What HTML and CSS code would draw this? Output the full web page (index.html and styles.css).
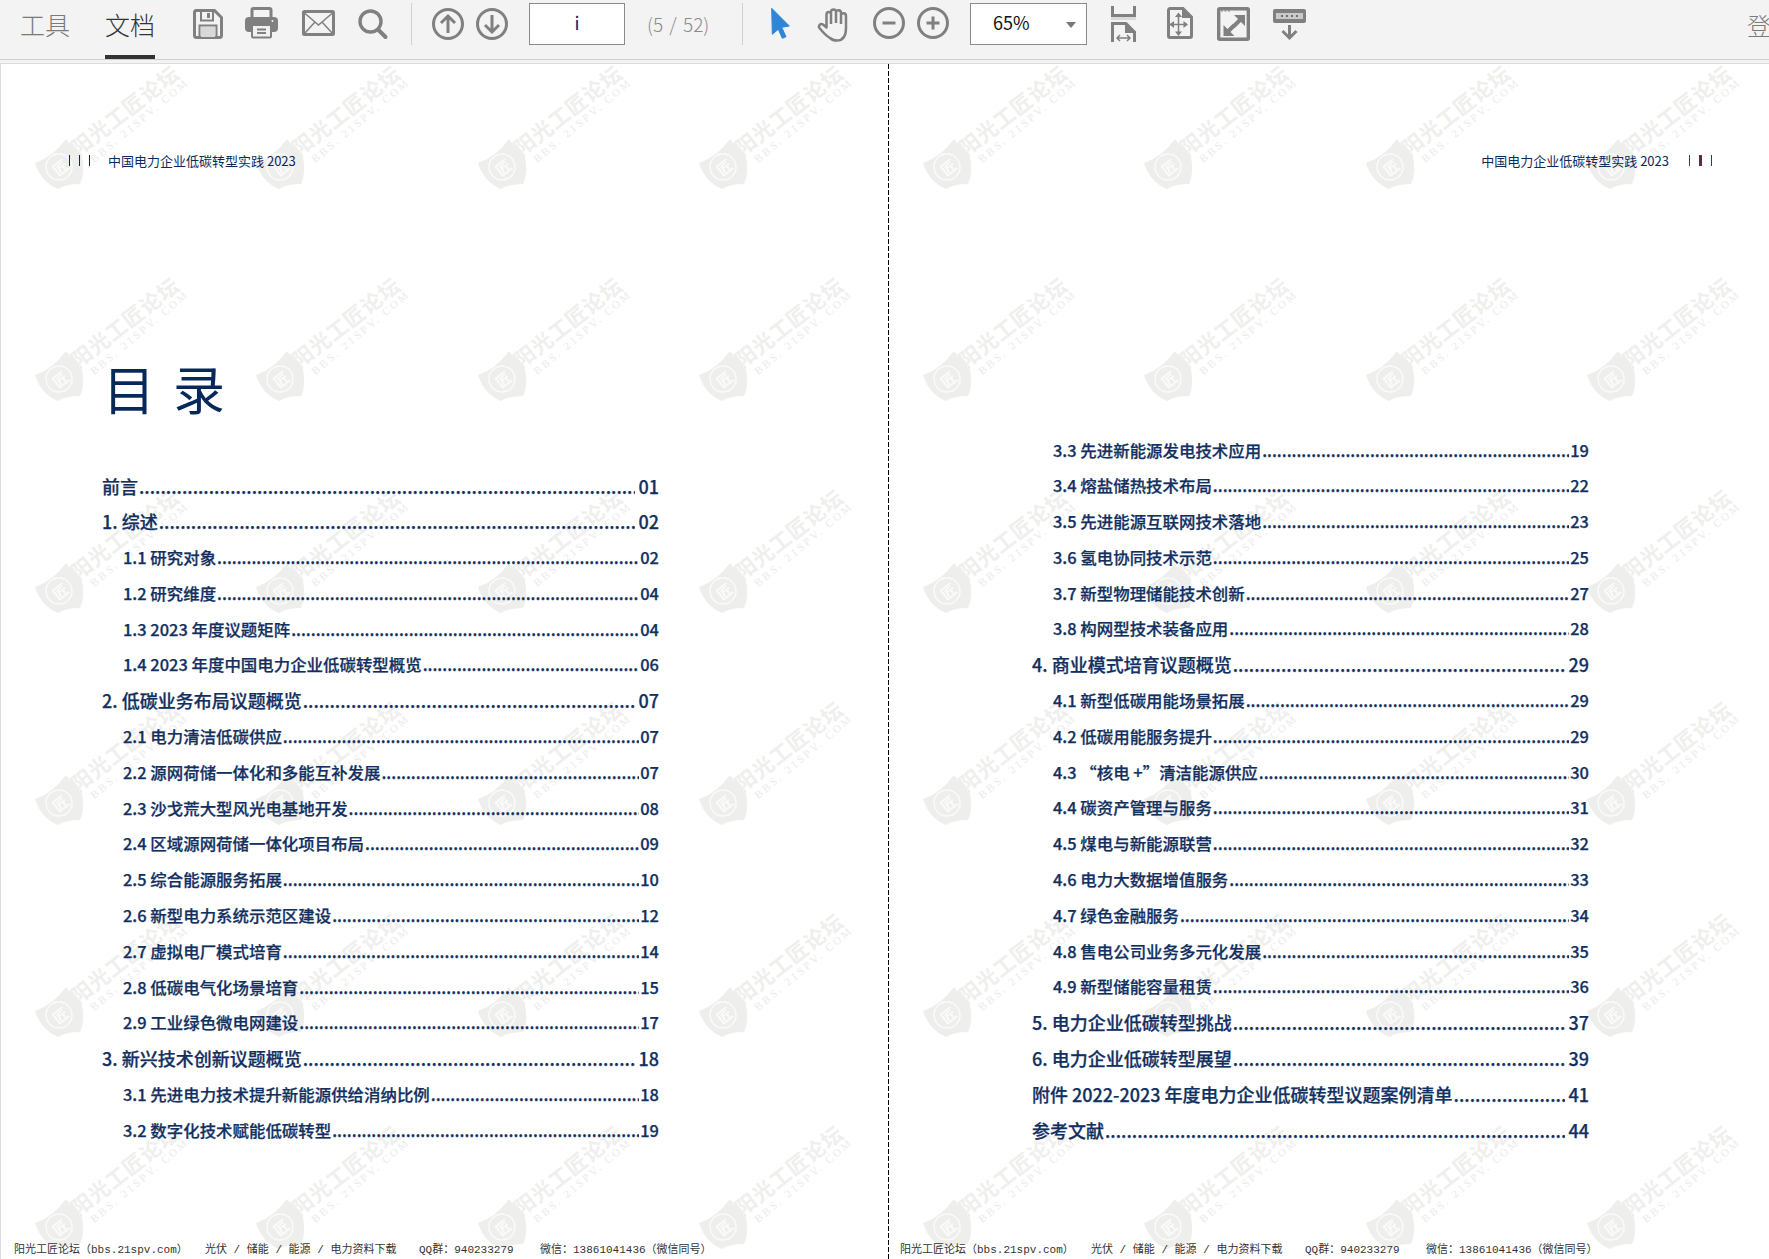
FILE: index.html
```html
<!DOCTYPE html>
<html lang="zh-CN">
<head>
<meta charset="utf-8">
<title>中国电力企业低碳转型实践 2023</title>
<link rel="stylesheet" href="styles.css">
</head>
<body>
<svg class="defs" xmlns="http://www.w3.org/2000/svg">
  <symbol id="wm" viewBox="0 0 170 135">
    <path class="wm-shield" d="M7 109Q25 103 38 85Q45 96 53 99Q58 118 52 130Q38 130 30 135Q13 128 7 109Z"/>
    <circle class="wm-ring" cx="31" cy="113" r="13"/>
    <text class="wm-glyph" x="32" y="113" transform="rotate(-39 32 113)" text-anchor="middle" dominant-baseline="central">匠</text>
    <text class="wm-main" x="96" y="56" transform="rotate(-38 96 56)" text-anchor="middle" dominant-baseline="central" textLength="130">阳光工匠论坛</text>
    <text class="wm-sub" x="110.500" y="67" transform="rotate(-40 110.500 67)" text-anchor="middle" dominant-baseline="central" textLength="122">BBS. 21SPV. COM</text>
  </symbol>
</svg>

<header class="toolbar">
  <div class="tab">工具</div>
  <div class="tab tab-active">文档</div>

  <svg class="icon i-save" viewBox="0 0 30 30"><path class="line" d="M3 1.500H21.500L28.500 8.500V26.500A2 2 0 0 1 26.500 28.500H3.500A2 2 0 0 1 1.500 26.500V3A1.500 1.500 0 0 1 3 1.500Z"/><path class="line thin" d="M8 1.500V11.500H20V1.500"/><rect class="solid" x="14" y="4" width="3" height="5"/><path class="line thin" d="M6.500 28V16.500H23.500V28"/><rect class="pale" x="8" y="18" width="14" height="10"/></svg>
  <svg class="icon i-print" viewBox="0 0 33 32"><path class="line" d="M7 11V3A1.500 1.500 0 0 1 8.500 1.500H24.500A1.500 1.500 0 0 1 26 3V11"/><rect class="solid" x="0" y="10" width="33" height="15" rx="4"/><circle class="hole" cx="27.500" cy="14" r="1"/><rect class="paper" x="7" y="18" width="19" height="12.500" rx="1"/><path class="line thin" d="M12 22.500H21M12 26H21"/></svg>
  <svg class="icon i-mail" viewBox="0 0 33 26"><rect class="line" x="1.500" y="1.500" width="30" height="23" rx="1"/><path class="line hair" d="M2.500 3L16.500 15L30.500 3M2.500 23.500L13 12M30.500 23.500L20 12"/></svg>
  <svg class="icon i-search" viewBox="0 0 30 30"><circle class="line wide" cx="12.500" cy="12.500" r="10.500"/><path class="line wider" d="M20.500 21L27.500 28"/></svg>

  <div class="sep sep-a"></div>

  <svg class="icon i-up" viewBox="0 0 32 32"><circle class="line" cx="16" cy="16" r="14.500"/><path class="line" d="M16 25V8M9 15L16 8L23 15"/></svg>
  <svg class="icon i-down" viewBox="0 0 32 32"><circle class="line" cx="16" cy="16" r="14.500"/><path class="line" d="M16 7V24M9 17L16 24L23 17"/></svg>

  <div class="field page-field">i</div>
  <div class="count">(5 / 52)</div>

  <div class="sep sep-b"></div>

  <svg class="icon i-arrow" viewBox="0 0 20 31"><path class="blue" d="M0.700 0.300L18.300 18L10.700 19.300L15 28.700L11.300 30.300L7.300 21.300L1.300 26.300Z"/></svg>
  <svg class="icon i-hand" viewBox="0 0 35 35"><path class="line mid" d="M13 31C8 28 5 24 2.500 21C1 19 3 16 6 17.500L9.500 20.500V7.500C9.500 4 14 4 14 7.500V5C14 1.500 19 1.500 19 5V5.500C19 2.500 24 2.500 24 6V8.500C24 5.500 29 5.500 29 9V21C29 29 26 33.500 20 33.500C17 33.500 15 33 13 31ZM14 7V17M19 5V16M24 7V17"/></svg>
  <svg class="icon i-minus" viewBox="0 0 32 32"><circle class="line" cx="16" cy="16" r="14.500"/><path class="line" d="M9.500 16H22.500"/></svg>
  <svg class="icon i-plus" viewBox="0 0 32 32"><circle class="line" cx="16" cy="16" r="14.500"/><path class="line" d="M9.500 16H22.500M16 9.500V22.500"/></svg>

  <div class="field zoom-field"><span>65%</span><i class="caret"></i></div>

  <svg class="icon i-width" viewBox="0 0 25 36"><path class="line" d="M1.500 0V9.500H23.500V0"/><rect class="band" x="0" y="11" width="25" height="3"/><path class="line" d="M1.500 36V17.500H15L23.500 26V36"/><path class="solid" d="M14 17L24 27H14Z"/><path class="line hair" d="M6 32H19M9 29L6 32L9 35M16 29L19 32L16 35"/></svg>
  <svg class="icon i-page" viewBox="0 0 26 32"><path class="line" d="M3 1.500H16L24.500 10V29A1.500 1.500 0 0 1 23 30.500H3A1.500 1.500 0 0 1 1.500 29V3A1.500 1.500 0 0 1 3 1.500Z"/><path class="solid" d="M15 1L25 11H15Z"/><path class="line hair" d="M11.500 8V26M3 17.500H20"/><path class="solid" d="M11.500 5.500L15 10H8ZM11.500 29L15 24.500H8ZM2.500 17.500L7 14V21ZM21 17.500L16.500 14V21Z"/></svg>
  <svg class="icon i-full" viewBox="0 0 33 34"><rect class="line wide" x="1.700" y="1.700" width="29.600" height="30.600" rx="1"/><path class="dots" d="M4 4H6M7.500 4H9.500M11 4H13"/><path class="solid" d="M17 8H28V19ZM6.500 18L17.500 29H6.500Z"/><path class="line wider" d="M23 13L17 19M11.500 24L17 18.500"/></svg>
  <svg class="icon i-get" viewBox="0 0 33 31"><rect class="solid" x="0" y="0" width="33" height="14" rx="2"/><rect class="slot" x="3" y="4" width="27" height="6"/><path class="dots" d="M8 7H10M13 7H15M18 7H20M23 7H25"/><path class="line" d="M16.500 16V29M9.500 22L16.500 29L23.500 22"/></svg>

  <div class="login">登</div>
</header>
<div class="strip"></div>

<main class="viewer">
  <section class="page page-left">
    <div class="marks">
      <svg class="mark"><use href="#wm"/></svg><svg class="mark"><use href="#wm"/></svg><svg class="mark"><use href="#wm"/></svg><svg class="mark"><use href="#wm"/></svg>
      <svg class="mark"><use href="#wm"/></svg><svg class="mark"><use href="#wm"/></svg><svg class="mark"><use href="#wm"/></svg><svg class="mark"><use href="#wm"/></svg>
      <svg class="mark"><use href="#wm"/></svg><svg class="mark"><use href="#wm"/></svg><svg class="mark"><use href="#wm"/></svg><svg class="mark"><use href="#wm"/></svg>
      <svg class="mark"><use href="#wm"/></svg><svg class="mark"><use href="#wm"/></svg><svg class="mark"><use href="#wm"/></svg><svg class="mark"><use href="#wm"/></svg>
      <svg class="mark"><use href="#wm"/></svg><svg class="mark"><use href="#wm"/></svg><svg class="mark"><use href="#wm"/></svg><svg class="mark"><use href="#wm"/></svg>
      <svg class="mark"><use href="#wm"/></svg><svg class="mark"><use href="#wm"/></svg><svg class="mark"><use href="#wm"/></svg><svg class="mark"><use href="#wm"/></svg>
    </div>
    <div class="running running-left">
      <div class="ticks"><i></i><i></i><i></i></div>
      <span>中国电力企业低碳转型实践 2023</span>
    </div>
    <h1 class="title">目<span class="title-gap"></span>录</h1>
    <div class="toc toc-left">
      <div class="row l1"><span>前言</span><span class="leader"></span><span>01</span></div>
      <div class="row l1"><span>1. 综述</span><span class="leader"></span><span>02</span></div>
      <div class="row l2"><span>1.1 研究对象</span><span class="leader"></span><span>02</span></div>
      <div class="row l2"><span>1.2 研究维度</span><span class="leader"></span><span>04</span></div>
      <div class="row l2"><span>1.3 2023 年度议题矩阵</span><span class="leader"></span><span>04</span></div>
      <div class="row l2"><span>1.4 2023 年度中国电力企业低碳转型概览</span><span class="leader"></span><span>06</span></div>
      <div class="row l1"><span>2. 低碳业务布局议题概览</span><span class="leader"></span><span>07</span></div>
      <div class="row l2"><span>2.1 电力清洁低碳供应</span><span class="leader"></span><span>07</span></div>
      <div class="row l2"><span>2.2 源网荷储一体化和多能互补发展</span><span class="leader"></span><span>07</span></div>
      <div class="row l2"><span>2.3 沙戈荒大型风光电基地开发</span><span class="leader"></span><span>08</span></div>
      <div class="row l2"><span>2.4 区域源网荷储一体化项目布局</span><span class="leader"></span><span>09</span></div>
      <div class="row l2"><span>2.5 综合能源服务拓展</span><span class="leader"></span><span>10</span></div>
      <div class="row l2"><span>2.6 新型电力系统示范区建设</span><span class="leader"></span><span>12</span></div>
      <div class="row l2"><span>2.7 虚拟电厂模式培育</span><span class="leader"></span><span>14</span></div>
      <div class="row l2"><span>2.8 低碳电气化场景培育</span><span class="leader"></span><span>15</span></div>
      <div class="row l2"><span>2.9 工业绿色微电网建设</span><span class="leader"></span><span>17</span></div>
      <div class="row l1"><span>3. 新兴技术创新议题概览</span><span class="leader"></span><span>18</span></div>
      <div class="row l2"><span>3.1 先进电力技术提升新能源供给消纳比例</span><span class="leader"></span><span>18</span></div>
      <div class="row l2"><span>3.2 数字化技术赋能低碳转型</span><span class="leader"></span><span>19</span></div>
    </div>
    <footer class="foot foot-left">
      <span>阳光工匠论坛（bbs.21spv.com）</span><span>光伏 / 储能 / 能源 / 电力资料下载</span><span>QQ群：940233279</span><span>微信：13861041436（微信同号）</span>
    </footer>
  </section>

  <div class="divider"></div>

  <section class="page page-right">
    <div class="marks">
      <svg class="mark"><use href="#wm"/></svg><svg class="mark"><use href="#wm"/></svg><svg class="mark"><use href="#wm"/></svg><svg class="mark"><use href="#wm"/></svg>
      <svg class="mark"><use href="#wm"/></svg><svg class="mark"><use href="#wm"/></svg><svg class="mark"><use href="#wm"/></svg><svg class="mark"><use href="#wm"/></svg>
      <svg class="mark"><use href="#wm"/></svg><svg class="mark"><use href="#wm"/></svg><svg class="mark"><use href="#wm"/></svg><svg class="mark"><use href="#wm"/></svg>
      <svg class="mark"><use href="#wm"/></svg><svg class="mark"><use href="#wm"/></svg><svg class="mark"><use href="#wm"/></svg><svg class="mark"><use href="#wm"/></svg>
      <svg class="mark"><use href="#wm"/></svg><svg class="mark"><use href="#wm"/></svg><svg class="mark"><use href="#wm"/></svg><svg class="mark"><use href="#wm"/></svg>
      <svg class="mark"><use href="#wm"/></svg><svg class="mark"><use href="#wm"/></svg><svg class="mark"><use href="#wm"/></svg><svg class="mark"><use href="#wm"/></svg>
    </div>
    <div class="running running-right">
      <span>中国电力企业低碳转型实践 2023</span>
      <div class="ticks ticks-colored"><i></i><i></i><i></i></div>
    </div>
    <div class="toc toc-right">
      <div class="row l2"><span>3.3 先进新能源发电技术应用</span><span class="leader"></span><span>19</span></div>
      <div class="row l2"><span>3.4 熔盐储热技术布局</span><span class="leader"></span><span>22</span></div>
      <div class="row l2"><span>3.5 先进能源互联网技术落地</span><span class="leader"></span><span>23</span></div>
      <div class="row l2"><span>3.6 氢电协同技术示范</span><span class="leader"></span><span>25</span></div>
      <div class="row l2"><span>3.7 新型物理储能技术创新</span><span class="leader"></span><span>27</span></div>
      <div class="row l2"><span>3.8 构网型技术装备应用</span><span class="leader"></span><span>28</span></div>
      <div class="row l1"><span>4. 商业模式培育议题概览</span><span class="leader"></span><span>29</span></div>
      <div class="row l2"><span>4.1 新型低碳用能场景拓展</span><span class="leader"></span><span>29</span></div>
      <div class="row l2"><span>4.2 低碳用能服务提升</span><span class="leader"></span><span>29</span></div>
      <div class="row l2"><span>4.3 “核电 +”清洁能源供应</span><span class="leader"></span><span>30</span></div>
      <div class="row l2"><span>4.4 碳资产管理与服务</span><span class="leader"></span><span>31</span></div>
      <div class="row l2"><span>4.5 煤电与新能源联营</span><span class="leader"></span><span>32</span></div>
      <div class="row l2"><span>4.6 电力大数据增值服务</span><span class="leader"></span><span>33</span></div>
      <div class="row l2"><span>4.7 绿色金融服务</span><span class="leader"></span><span>34</span></div>
      <div class="row l2"><span>4.8 售电公司业务多元化发展</span><span class="leader"></span><span>35</span></div>
      <div class="row l2"><span>4.9 新型储能容量租赁</span><span class="leader"></span><span>36</span></div>
      <div class="row l1"><span>5. 电力企业低碳转型挑战</span><span class="leader"></span><span>37</span></div>
      <div class="row l1"><span>6. 电力企业低碳转型展望</span><span class="leader"></span><span>39</span></div>
      <div class="row l1"><span>附件 2022-2023 年度电力企业低碳转型议题案例清单</span><span class="leader"></span><span>41</span></div>
      <div class="row l1"><span>参考文献</span><span class="leader"></span><span>44</span></div>
    </div>
    <footer class="foot foot-right">
      <span>阳光工匠论坛（bbs.21spv.com）</span><span>光伏 / 储能 / 能源 / 电力资料下载</span><span>QQ群：940233279</span><span>微信：13861041436（微信同号）</span>
    </footer>
  </section>
</main>
</body>
</html>
```

FILE: styles.css
```css
* { box-sizing: border-box; }

html, body {
  margin: 0;
  height: 1259px;
  overflow: hidden;
  background: #fff;
  font-family: "Noto Sans CJK SC", "Noto Sans", sans-serif;
}

.defs { display: none; }

/* toolbar */
.toolbar {
  display: flex;
  align-items: flex-start;
  height: 60px;
  padding: 3px 0 0 20px;
  background: #f3f3f3;
  border-bottom: 1px solid #cdcdcd;
  overflow: hidden;
}
.strip {
  height: 4px;
  background: #f3f3f3;
  border-bottom: 1px solid #dcdcdc;
}
.tab {
  flex: none;
  width: 50px;
  height: 56px;
  border-bottom: 4px solid transparent;
  font-size: 25px;
  line-height: 42px;
  color: #7a7a7a;
  font-weight: 300;
}
.tab-active {
  margin-left: 35px;
  color: #333;
  border-bottom-color: #333;
}

.icon { flex: none; display: block; overflow: visible; }
.line { fill: none; stroke: #808080; stroke-width: 3; }
.line.thin { stroke-width: 2; }
.line.hair { stroke-width: 1.500; }
.line.mid { stroke-width: 2.500; stroke-linejoin: round; }
.line.wide { stroke-width: 3.400; }
.line.wider { stroke-width: 4; stroke-linecap: round; }
.solid { fill: #808080; }
.pale { fill: #d9d9d9; }
.paper { fill: #f1f1f1; stroke: #808080; stroke-width: 2; }
.hole { fill: #f3f3f3; }
.blue { fill: #2f86d8; stroke: #2f86d8; stroke-width: 1; stroke-linejoin: round; }
.band { fill: #dadada; }
.slot { fill: #c9c9c9; }
.dots { fill: none; stroke: #707070; stroke-width: 2; }
.i-full .dots { stroke: #808080; stroke-width: 1; }

.i-save   { width: 30px; height: 30px; margin: 6px 0 0 38px; }
.i-print  { width: 33px; height: 32px; margin: 4px 0 0 22px; }
.i-mail   { width: 33px; height: 26px; margin: 7px 0 0 24px; }
.i-search { width: 30px; height: 30px; margin: 6px 0 0 23px; }
.i-up     { width: 32px; height: 32px; margin: 5px 0 0 20px; }
.i-down   { width: 32px; height: 32px; margin: 5px 0 0 12px; }
.i-arrow  { width: 20px; height: 31px; margin: 5px 0 0 28px; }
.i-hand   { width: 35px; height: 35px; margin: 4px 0 0 26px; }
.i-minus  { width: 32px; height: 32px; margin: 4px 0 0 21px; }
.i-plus   { width: 32px; height: 32px; margin: 4px 0 0 12px; }
.i-width  { width: 25px; height: 36px; margin: 3px 0 0 24px; }
.i-page   { width: 26px; height: 32px; margin: 4px 0 0 31px; }
.i-full   { width: 33px; height: 34px; margin: 4px 0 0 24px; }
.i-get    { width: 33px; height: 31px; margin: 6px 0 0 23px; }

.sep { flex: none; width: 1px; height: 42px; background: #d0d0d0; }
.sep-a { margin-left: 23px; }
.sep-b { margin-left: 23px; }

.field {
  flex: none;
  height: 42px;
  background: #fff;
  border: 1px solid #8a8a8a;
  font-size: 18px;
  color: #12235e;
}
.page-field {
  width: 96px;
  margin-left: 21px;
  text-align: center;
  line-height: 36px;
}
.count {
  flex: none;
  width: 72px;
  margin-left: 22px;
  font-size: 19px;
  word-spacing: 2px;
  line-height: 42px;
  color: #8b8b8b;
  font-weight: 300;
  white-space: nowrap;
}
.zoom-field {
  display: flex;
  align-items: center;
  width: 117px;
  margin-left: 21px;
  padding: 0 10px 4px 22px;
  color: #111;
}
.caret {
  margin-left: auto;
  margin-top: 5px;
  border-left: 5px solid transparent;
  border-right: 5px solid transparent;
  border-top: 6px solid #777;
}
.login {
  flex: none;
  width: 24px;
  margin-left: 441px;
  font-size: 24px;
  line-height: 44px;
  color: #7a7a7a;
  font-weight: 300;
}

/* viewer */
.viewer {
  display: flex;
  height: 1195px;
  overflow: hidden;
}
.page {
  position: relative;
  display: flex;
  flex-direction: column;
  height: 1195px;
  overflow: hidden;
  background: #fff;
}
.page-left {
  flex: none;
  width: 888px;
  border-left: 1px solid #dcdcdc;
}
.page-right { flex: 1; min-width: 0; }
.divider {
  flex: none;
  width: 1px;
  background: repeating-linear-gradient(to bottom, #000 0 5px, transparent 5px 7px);
}

/* watermark layer over the page background */
.marks {
  position: absolute;
  top: -10px;
  left: 27px;
  display: grid;
  grid-template-columns: repeat(4, 221.4px);
  grid-auto-rows: 212px;
}
.mark { display: block; width: 170px; height: 135px; overflow: visible; }
.wm-shield { fill: #eeeeec; }
.wm-ring { fill: none; stroke: #fafafa; stroke-width: 1.500; }
.wm-glyph { font: 700 15px "Noto Sans CJK SC", sans-serif; fill: #fbfbfb; }
.wm-main { font: 700 21px "Noto Sans CJK SC", sans-serif; fill: #efefed; }
.wm-sub { font: 400 11px "Liberation Serif", serif; fill: #ebebe9; }

.running, .title, .toc, .foot { position: relative; }

.running {
  display: flex;
  align-items: center;
  height: 20px;
  margin-top: 86px;
  font-size: 13px;
  color: #0b2a5b;
  white-space: nowrap;
}
.running-left { padding-left: 68px; }
.running-left .ticks { margin-right: 18px; }
.running-right { justify-content: flex-end; padding-right: 57px; }
.running-right .ticks { margin-left: 20px; }
.ticks { display: flex; gap: 9px; }
.ticks i { display: block; width: 1px; height: 11px; background: #0b2a5b; }
.ticks-colored i:nth-child(1) { background: #8a1d4d; }
.ticks-colored i:nth-child(2) { width: 3px; background: #5e2b45; }
.ticks-colored i:nth-child(3) { background: #0b4a6b; }

.title {
  margin: 188px 0 0 102px;
  font-size: 52px;
  font-weight: 400;
  line-height: 60px;
  color: #06285a;
}
.title-gap { display: inline-block; width: 18px; }

.toc {
  width: 557px;
  color: #12305f;
  font-weight: 500;
  -webkit-text-stroke: 0.25px #12305f;
}
.toc-left { margin: 50.5px 0 0 101px; }
.toc-right { margin: 262.5px 0 0 143px; }

.row {
  display: flex;
  height: 35.8px;
  line-height: 35.8px;
  white-space: nowrap;
}
.l1 { font-size: 18px; }
.l2 { font-size: 16.45px; padding-left: 21px; }
.leader {
  flex: 1;
  min-width: 0;
  overflow: hidden;
}
.l1 .leader { margin: 0 3px 0 1px; }
.l2 .leader { margin: 0 1px; }
.leader::after {
  content: "..........................................................................................................................................................";
}

.foot {
  display: grid;
  margin-top: auto;
  padding-bottom: 2px;
  grid-template-columns: 191px 214px 121px auto;
  font-family: "Liberation Mono", "Noto Sans CJK SC", monospace;
  font-size: 11px;
  line-height: 14px;
  color: #333;
  white-space: nowrap;
}
.foot-left { padding-left: 13px; }
.foot-right { padding-left: 11px; }
```
